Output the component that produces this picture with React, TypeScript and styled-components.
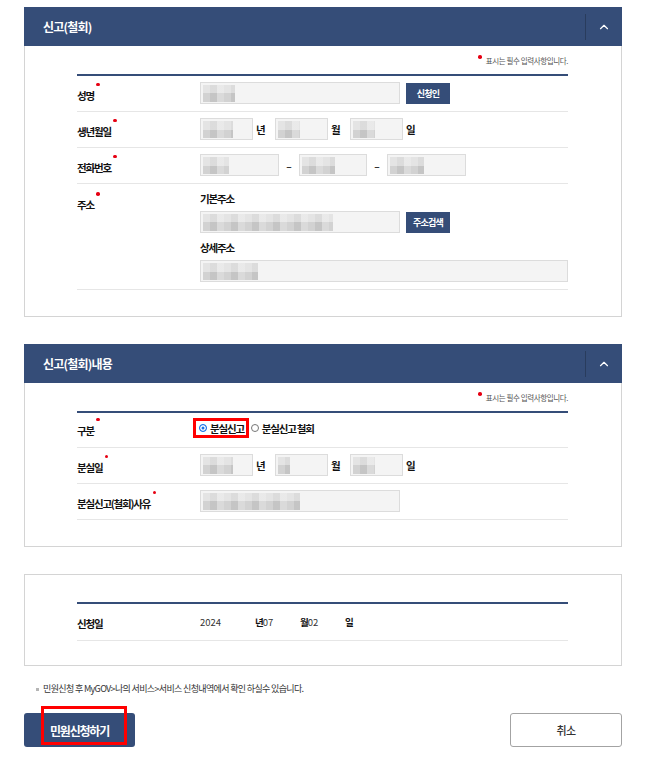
import React from "react";
import styled, { createGlobalStyle } from "styled-components";
import { ChevronUp } from "lucide-react";

const NAVY = "#354d78";

const GlobalStyle = createGlobalStyle`
  * { box-sizing: border-box; }
  body {
    margin: 0;
    background: #fff;
    color: #222;
    font-family: "Noto Sans CJK KR", "Noto Sans", sans-serif;
  }
`;

const Page = styled.div`
  width: 598px;
  margin: 7px 0 19px 24px;
  display: flex;
  flex-direction: column;
`;

const Section = styled.section`
  margin-bottom: 27px;
`;

const Header = styled.div`
  height: 39px;
  background: ${NAVY};
  display: flex;
  align-items: center;
  padding-left: 19px;
`;

const Title = styled.h2`
  flex: 1;
  margin: 0;
  color: #fff;
  font-size: 12px;
  font-weight: 700;
  letter-spacing: -0.8px;
`;

const Toggle = styled.button`
  width: 37px;
  height: 26px;
  padding: 0;
  border: none;
  border-left: 1px solid rgba(0, 0, 0, 0.22);
  background: transparent;
  color: #fff;
  display: flex;
  align-items: center;
  justify-content: center;
`;

const Body = styled.div`
  border: 1px solid #d4d4d4;
  border-top: none;
  padding: 8px 53px 26px 52px;
`;

const Box = styled.div`
  border: 1px solid #d4d4d4;
  padding: 27px 53px 24px 52px;
`;

const Required = styled.div`
  text-align: right;
  font-size: 7.5px;
  line-height: 14px;
  letter-spacing: -0.4px;
  color: #555;
  margin-bottom: 6px;
`;

const Dot = styled.span`
  display: inline-block;
  width: 3.5px;
  height: 3.5px;
  margin: 1px 4px 0 0;
  border-radius: 50%;
  background: #e60012;
  vertical-align: top;
`;

const Table = styled.div`
  border-top: 2px solid ${NAVY};
`;

const Row = styled.div<{ $top?: boolean }>`
  display: flex;
  align-items: ${(p) => (p.$top ? "flex-start" : "center")};
  padding: ${(p) => (p.$top ? "8px 0 7px" : "6px 0 7px")};
  border-bottom: 1px solid #e6e6e6;
`;

const RadioRow = styled(Row)`
  padding: 5px 0 9px;
`;

const TextRow = styled(Row)`
  padding: 8px 0 9px;
`;

const Label = styled.div<{ $top?: boolean }>`
  width: 123px;
  flex-shrink: 0;
  padding-top: ${(p) => (p.$top ? "3px" : "2px")};
  line-height: 14px;
`;

const LabelText = styled.span<{ $req?: boolean }>`
  position: relative;
  font-size: 10.5px;
  font-weight: 700;
  letter-spacing: -1.2px;
  color: #111;

  &::after {
    content: "";
    display: ${(p) => (p.$req ? "block" : "none")};
    position: absolute;
    right: -6px;
    top: -5px;
    width: 3.5px;
    height: 3.5px;
    border-radius: 50%;
    background: #e60012;
  }
`;

const Cell = styled.div`
  display: flex;
  align-items: center;
`;

const Stack = styled.div`
  display: flex;
  flex-direction: column;
`;

const SubLabel = styled.div<{ $gap?: boolean }>`
  font-size: 10.5px;
  font-weight: 700;
  letter-spacing: -1.2px;
  line-height: 14px;
  color: #111;
  margin: ${(p) => (p.$gap ? "8px" : "0")} 0 5px;
`;

const Field = styled.div<{ $w: number }>`
  width: ${(p) => p.$w}px;
  height: 22px;
  background: #f4f4f4;
  border: 1px solid #dcdcdc;
  display: flex;
  align-items: center;
  padding-left: 2px;
  flex-shrink: 0;
`;

const Blur = styled.span<{ $w: number }>`
  display: block;
  width: ${(p) => p.$w}px;
  height: 17px;
  background-image: linear-gradient(
      180deg,
      rgba(255, 255, 255, 0.35) 50%,
      rgba(0, 0, 0, 0.02) 50%
    ),
    repeating-linear-gradient(
      90deg,
      #d6d6d6 0 7px,
      #c9c9c9 7px 14px,
      #dedede 14px 21px
    );
`;

const SmallButton = styled.button`
  margin-left: 6px;
  width: 44px;
  height: 21px;
  padding: 0;
  border: none;
  background: ${NAVY};
  color: #fff;
  font-family: inherit;
  font-size: 9px;
  font-weight: 700;
  letter-spacing: -0.8px;
`;

const Unit = styled.span<{ $w?: number }>`
  display: inline-block;
  width: ${(p) => (p.$w ? `${p.$w}px` : "auto")};
  padding-left: 3px;
  font-size: 10.5px;
  font-weight: 700;
  letter-spacing: -1px;
  color: #111;
`;

const Sep = styled.span`
  width: 20px;
  text-align: center;
  font-size: 10px;
  font-weight: 700;
  color: #333;
`;

const Options = styled.div`
  display: flex;
  align-items: center;
  height: 20px;
`;

const Option = styled.label<{ $mark?: boolean }>`
  display: flex;
  align-items: center;
  gap: 3px;
  height: 20px;
  margin-left: ${(p) => (p.$mark ? "-7px" : "2px")};
  padding: ${(p) => (p.$mark ? "0 2px 0 3px" : "0")};
  border: ${(p) => (p.$mark ? "3px solid #ff0000" : "none")};
  font-size: 10.5px;
  font-weight: 700;
  letter-spacing: -1.2px;
  color: #111;
`;

const Radio = styled.span<{ $on?: boolean }>`
  width: 8px;
  height: 8px;
  border-radius: 50%;
  border: 1px solid ${(p) => (p.$on ? "#1a73e8" : "#767676")};
  background: ${(p) => (p.$on ? "#1a73e8" : "#fff")};
  box-shadow: ${(p) => (p.$on ? "inset 0 0 0 1.5px #fff" : "none")};
`;

const DateText = styled.div`
  display: flex;
  font-size: 9.5px;
  line-height: 14px;
  color: #333;
`;

const Slot = styled.span<{ $w: number }>`
  width: ${(p) => p.$w}px;
`;

const DateUnit = styled.span`
  font-weight: 700;
  letter-spacing: -1px;
  color: #111;
`;

const Notice = styled.p`
  margin: 16px 0 0;
  font-size: 9px;
  line-height: 14px;
  letter-spacing: -0.65px;
  color: #333;

  &::before {
    content: "";
    display: inline-block;
    width: 3px;
    height: 3px;
    margin: 0 4px 0 12px;
    background: #b5b5b5;
    vertical-align: middle;
  }
`;

const Actions = styled.div`
  display: flex;
  justify-content: space-between;
  margin-top: 17px;
`;

const Submit = styled.button`
  position: relative;
  width: 111px;
  height: 34px;
  border: none;
  border-radius: 3px;
  background: ${NAVY};
  color: #fff;
  font-family: inherit;
  font-size: 12px;
  font-weight: 700;
  letter-spacing: -1.2px;
`;

const Mark = styled.span`
  position: absolute;
  left: 17px;
  top: -7px;
  width: 86px;
  height: 39px;
  border: 3px solid #ff0000;
`;

const Cancel = styled.button`
  width: 112px;
  height: 34px;
  border: 1px solid #a3a3a3;
  border-radius: 3px;
  background: #fff;
  color: #333;
  font-family: inherit;
  font-size: 11px;
  font-weight: 500;
  letter-spacing: -0.5px;
`;

const Panel = ({ title, children }: { title: string; children: React.ReactNode }) => (
  <Section>
    <Header>
      <Title>{title}</Title>
      <Toggle aria-label="접기">
        <ChevronUp size={14} strokeWidth={2} />
      </Toggle>
    </Header>
    <Body>
      <Required>
        <Dot />
        표시는 필수 입력사항입니다.
      </Required>
      <Table>{children}</Table>
    </Body>
  </Section>
);

const DateInputs = ({ blur }: { blur: [number, number, number] }) => (
  <Cell>
    <Field $w={53}>
      <Blur $w={blur[0]} />
    </Field>
    <Unit $w={22}>년</Unit>
    <Field $w={53}>
      <Blur $w={blur[1]} />
    </Field>
    <Unit $w={22}>월</Unit>
    <Field $w={53}>
      <Blur $w={blur[2]} />
    </Field>
    <Unit>일</Unit>
  </Cell>
);

export default function App() {
  return (
    <>
      <GlobalStyle />
      <Page>
        <Panel title="신고(철회)">
          <Row>
            <Label>
              <LabelText $req>성명</LabelText>
            </Label>
            <Cell>
              <Field $w={200}>
                <Blur $w={32} />
              </Field>
              <SmallButton>신청인</SmallButton>
            </Cell>
          </Row>
          <Row>
            <Label>
              <LabelText $req>생년월일</LabelText>
            </Label>
            <DateInputs blur={[30, 22, 22]} />
          </Row>
          <Row>
            <Label>
              <LabelText $req>전화번호</LabelText>
            </Label>
            <Cell>
              <Field $w={79}>
                <Blur $w={26} />
              </Field>
              <Sep>–</Sep>
              <Field $w={68}>
                <Blur $w={33} />
              </Field>
              <Sep>–</Sep>
              <Field $w={79}>
                <Blur $w={34} />
              </Field>
            </Cell>
          </Row>
          <Row $top>
            <Label $top>
              <LabelText $req>주소</LabelText>
            </Label>
            <Stack>
              <SubLabel>기본주소</SubLabel>
              <Cell>
                <Field $w={200}>
                  <Blur $w={130} />
                </Field>
                <SmallButton>주소검색</SmallButton>
              </Cell>
              <SubLabel $gap>상세주소</SubLabel>
              <Field $w={368}>
                <Blur $w={55} />
              </Field>
            </Stack>
          </Row>
        </Panel>

        <Panel title="신고(철회)내용">
          <RadioRow>
            <Label>
              <LabelText $req>구분</LabelText>
            </Label>
            <Options>
              <Option $mark>
                <Radio $on />
                분실신고
              </Option>
              <Option>
                <Radio />
                분실신고 철회
              </Option>
            </Options>
          </RadioRow>
          <Row>
            <Label>
              <LabelText $req>분실일</LabelText>
            </Label>
            <DateInputs blur={[30, 12, 22]} />
          </Row>
          <Row>
            <Label>
              <LabelText $req>분실신고(철회)사유</LabelText>
            </Label>
            <Field $w={200}>
              <Blur $w={97} />
            </Field>
          </Row>
        </Panel>

        <Box>
          <Table>
            <TextRow>
              <Label>
                <LabelText>신청일</LabelText>
              </Label>
              <DateText>
                <Slot $w={55}>2024</Slot>
                <Slot $w={45}>
                  <DateUnit>년</DateUnit>07
                </Slot>
                <Slot $w={45}>
                  <DateUnit>월</DateUnit>02
                </Slot>
                <DateUnit>일</DateUnit>
              </DateText>
            </TextRow>
          </Table>
        </Box>

        <Notice>민원신청 후 MyGOV&gt;나의 서비스&gt;서비스 신청내역에서 확인 하실수 있습니다.</Notice>

        <Actions>
          <Submit>
            민원신청하기
            <Mark />
          </Submit>
          <Cancel>취소</Cancel>
        </Actions>
      </Page>
    </>
  );
}
